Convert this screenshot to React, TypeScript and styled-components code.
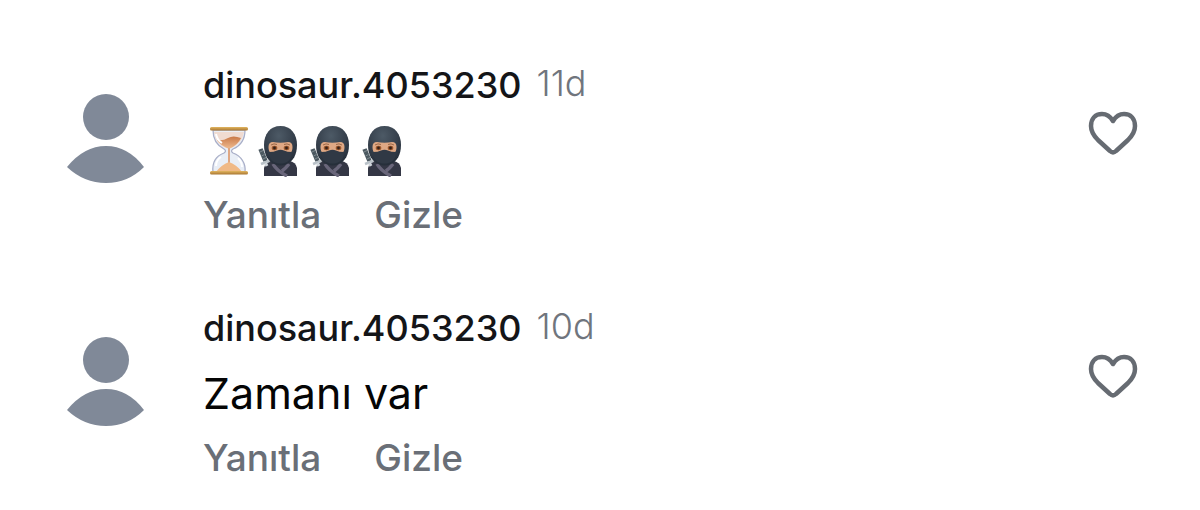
import React, { useState } from "react";
import styled, { createGlobalStyle } from "styled-components";

const GlobalStyle = createGlobalStyle`
  * { box-sizing: border-box; }
  body {
    margin: 0;
    background: #fff;
    font-family: Inter, Roboto, "Liberation Sans", sans-serif;
  }
`;

const CommentList = styled.main`
  display: flex;
  flex-direction: column;
  gap: 66px;
  padding: 62px 62px 20px 66px;
`;

const CommentRow = styled.article`
  display: flex;
  align-items: flex-start;
`;

const Avatar = styled.svg`
  flex: none;
  width: 79px;
  height: 91px;
  margin: 32px 58px 0 0;
  fill: #808998;
`;

const Content = styled.div`
  flex: 1;
  min-width: 0;
`;

const Header = styled.header`
  display: flex;
  align-items: flex-start;
  gap: 15px;
  line-height: 47px;
`;

const Username = styled.a`
  color: #141518;
  font-size: 36px;
  font-weight: 500;
  text-decoration: none;
`;

const Age = styled.time`
  color: #70757d;
  font-size: 36px;
  font-weight: 300;
  line-height: 43px;
`;

const Body = styled.p`
  display: flex;
  align-items: center;
  height: 82px;
  margin: 0;
  color: #050505;
  font-size: 43px;
  font-weight: 400;
`;

const EmojiLine = styled.span`
  display: flex;
  gap: 2px;
`;

const Emoji = styled.svg`
  width: 50px;
  height: 54px;
`;

const Actions = styled.footer`
  display: flex;
  gap: 53px;
`;

const ActionButton = styled.button`
  padding: 0;
  border: 0;
  background: none;
  color: #6a6f77;
  font: inherit;
  font-size: 37px;
  font-weight: 500;
  line-height: 48px;
  cursor: pointer;
`;

const LikeButton = styled.button`
  flex: none;
  margin-top: 48px;
  padding: 0;
  border: 0;
  background: none;
  cursor: pointer;
`;

const HeartIcon = styled.svg<{ $liked: boolean }>`
  display: block;
  width: 50px;
  height: 46px;
  fill: ${(p) => (p.$liked ? "#666b72" : "none")};
  stroke: #666b72;
  stroke-width: 4.5;
  stroke-linejoin: round;
`;

function Hourglass() {
  return (
    <Emoji viewBox="0 0 50 54" role="img" aria-label="hourglass">
      <defs>
        <linearGradient id="wood" x2="0" y2="1">
          <stop offset="0" stopColor="#e2b660" />
          <stop offset="1" stopColor="#a87531" />
        </linearGradient>
        <linearGradient id="sand" x2="0" y2="1">
          <stop offset="0" stopColor="#c97847" />
          <stop offset="1" stopColor="#f0bd92" />
        </linearGradient>
      </defs>
      <path
        d="M10 7C10 18 15 23 21 26Q24 28 21 30C13 33 9 40 10 49H42C43 40 38 33 30 30Q27 28 30 26C37 23 42 18 42 7Z"
        fill="#e9eef6"
        stroke="#a9afc8"
        strokeWidth="1.3"
      />
      <path d="M11 9Q12 21 23 25H28Q39 21 41 9Z" fill="#f0dbd1" />
      <path d="M14 17Q20 18 25 15T38 15Q35 22 26 26Q17 22 14 17Z" fill="url(#sand)" />
      <path d="M26 25V41" stroke="#dfa783" strokeWidth="2" />
      <path d="M13 49Q18 42 26 39Q34 42 39 49Z" fill="#f0b986" />
      <path d="M13 11Q14 17 19 20M13 43Q13 37 18 34M35 35Q39 39 39 44" fill="none" stroke="#fff" strokeWidth="2" />
      <rect x="7" y="4" width="38" height="3.5" rx="1.5" fill="url(#wood)" />
      <rect x="7" y="48" width="38" height="3.5" rx="1.5" fill="url(#wood)" />
    </Emoji>
  );
}

function Ninja() {
  return (
    <Emoji viewBox="0 0 50 54" role="img" aria-label="ninja">
      <defs>
        <radialGradient id="hood" cx=".45" cy=".25" r=".75">
          <stop offset="0" stopColor="#4d5a66" />
          <stop offset=".6" stopColor="#36404c" />
          <stop offset="1" stopColor="#252e39" />
        </radialGradient>
      </defs>
      <path d="M9 53V45Q10 39 17 38H34Q41 39 42 45V53Z" fill="#343745" />
      <path d="M18 41Q22 48 32 53M34 41Q31 45 27 48" fill="none" stroke="#69667a" strokeWidth="3.5" />
      <path d="M25.500 3C15 3 9 11 9 22C9 32 13 38 19 41Q25.500 44 32 41C38 38 42 32 42 22C42 11 36 3 25.500 3Z" fill="url(#hood)" />
      <path d="M13.500 24Q13.500 19 18 19Q25.500 20.500 33 19Q37.500 19 37.500 24Q37.500 29 35 30H16Q13.500 29 13.500 24Z" fill="#dfa884" />
      <path d="M16 22Q19 20 22 21.500M29 21.500Q32 20 35 22" fill="none" stroke="#9b6848" strokeWidth="1" />
      <ellipse cx="19.500" cy="25" rx="2.800" ry="2.200" fill="#9a562b" />
      <ellipse cx="31.500" cy="25" rx="2.800" ry="2.200" fill="#9a562b" />
      <circle cx="19.500" cy="25" r="1.400" fill="#352018" />
      <circle cx="31.500" cy="25" r="1.400" fill="#352018" />
      <path d="M14 29Q19 29 22 27.500Q25.500 26 29 27.500Q32 29 37 29Q37 36 32 39Q25.500 42 19 39Q14 36 14 29Z" fill="#303945" />
      <path d="M5.500 26L10.500 38" stroke="#4c5961" strokeWidth="4.500" />
      <path d="M5 29L8 27.500M6.500 33L9.500 31.500M8 36L11 34.500" stroke="#8b979c" strokeWidth=".8" />
      <path d="M6 41L14 38" stroke="#b9c1c8" strokeWidth="2.500" />
      <path d="M10.500 40L12 43" stroke="#d0d6dc" strokeWidth="3" />
    </Emoji>
  );
}

interface CommentProps {
  age: string;
  children: React.ReactNode;
}

function Comment({ age, children }: CommentProps) {
  const [liked, setLiked] = useState(false);
  return (
    <CommentRow>
      <Avatar viewBox="0 0 79 91" aria-hidden="true">
        <circle cx="40" cy="23" r="23" />
        <path d="M1 73Q18 52 40 52T78 73Q62 89 40 89T1 73Z" />
      </Avatar>
      <Content>
        <Header>
          <Username href="#profile">dinosaur.4053230</Username>
          <Age>{age}</Age>
        </Header>
        <Body>{children}</Body>
        <Actions>
          <ActionButton type="button">Yanıtla</ActionButton>
          <ActionButton type="button">Gizle</ActionButton>
        </Actions>
      </Content>
      <LikeButton type="button" aria-label="Beğen" aria-pressed={liked} onClick={() => setLiked(!liked)}>
        <HeartIcon $liked={liked} viewBox="0 0 50 46">
          <path d="M25 11C22 6 19 4 14 4C7 4 3 9 3 16C3 22 6 26 10 30L22 41Q25 44 28 41L40 30C44 26 47 22 47 16C47 9 43 4 36 4C31 4 28 6 25 11Z" />
        </HeartIcon>
      </LikeButton>
    </CommentRow>
  );
}

export default function App() {
  return (
    <>
      <GlobalStyle />
      <CommentList>
        <Comment age="11d">
          <EmojiLine>
            <Hourglass />
            <Ninja />
            <Ninja />
            <Ninja />
          </EmojiLine>
        </Comment>
        <Comment age="10d">Zamanı var</Comment>
      </CommentList>
    </>
  );
}
